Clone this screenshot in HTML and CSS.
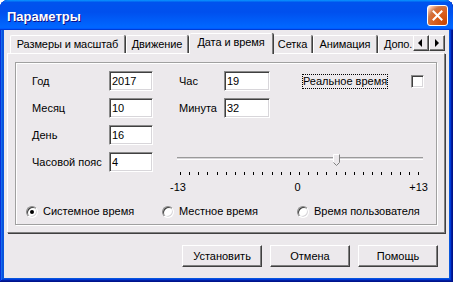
FILE: index.html
```html
<!DOCTYPE html>
<html lang="ru">
<head>
  <meta charset="UTF-8" />
  <title>Параметры</title>
  <link rel="stylesheet" href="styles.css">
</head>
<body>
<div class="window">
  <div class="titlebar">
    <span class="title">Параметры</span>
    <button class="close" aria-label="Закрыть">
      <svg width="11" height="11" viewBox="0 0 11 11"><path d="M1.5 1.5l8 8M9.5 1.5l-8 8" stroke="#fff" stroke-width="2" stroke-linecap="square"/></svg>
    </button>
  </div>

  <div class="client">
    <!-- Tab strip -->
    <div class="tabrow">
      <div class="tablist">
        <div class="tab t-size">Размеры и масштаб</div>
        <div class="tab t-move">Движение</div>
        <div class="tab t-date active">Дата и время</div>
        <div class="tab t-grid">Сетка</div>
        <div class="tab t-anim">Анимация</div>
        <div class="tab t-more">Допо.</div>
      </div>
      <div class="spin">
        <button class="spin-btn"><span class="arr left"></span></button>
        <button class="spin-btn"><span class="arr right"></span></button>
      </div>
    </div>

    <!-- Tab page -->
    <div class="panel">
      <div class="group">
        <div class="form">
          <span class="c1">Год</span>
          <input class="edit c2" value="2017">
          <span class="c4">Час</span>
          <input class="edit c5" value="19">
          <span class="c7"><span class="focus">Реальное время</span></span>
          <span class="check c9"></span>

          <span class="c1">Месяц</span>
          <input class="edit c2" value="10">
          <span class="c4">Минута</span>
          <input class="edit c5" value="32">

          <span class="c1">День</span>
          <input class="edit c2" value="16">

          <span class="c1">Часовой пояс</span>
          <input class="edit c2" value="4">
          <svg class="slider" width="246" height="24" viewBox="0 0 246 24">
            <rect x="0" y="5" width="246" height="1" fill="#9a9a9a"/>
            <rect x="0" y="6" width="246" height="1" fill="#d6d4d8"/>
            <rect x="0" y="7" width="246" height="1" fill="#ffffff"/>
            <path d="M3.5 20v3M12.5 20v3M21.5 20v3M30.5 20v3M40.5 20v3M49.5 20v3M58.5 20v3M67.5 20v3M76.5 20v3M85.5 20v3M95.5 20v3M104.5 20v3M113.5 20v3M122.5 20v3M131.5 20v3M140.5 20v3M149.5 20v3M159.5 20v3M168.5 20v3M177.5 20v3M186.5 20v3M195.5 20v3M204.5 20v3M214.5 20v3M223.5 20v3M232.5 20v3M241.5 20v3" stroke="#000" stroke-width="1"/>
            <polygon points="156.5,2.5 162.5,2.5 162.5,10.5 159.5,13.5 156.5,10.5" fill="#ece9ec"/>
            <polyline points="156.5,10.5 156.5,2.5 162.5,2.5" fill="none" stroke="#fff"/>
            <polyline points="162.5,2.5 162.5,10.5 159.5,13.5 156.5,10.5" fill="none" stroke="#808080"/>
          </svg>
        </div>

        <div class="scale">
          <span>-13</span><span>0</span><span>+13</span>
        </div>

        <div class="radios">
          <label class="radio"><span class="dot on"></span>Системное время</label>
          <label class="radio"><span class="dot"></span>Местное время</label>
          <label class="radio"><span class="dot"></span>Время пользователя</label>
        </div>
      </div>
    </div>

    <div class="buttons">
      <button class="btn">Установить</button>
      <button class="btn">Отмена</button>
      <button class="btn">Помощь</button>
    </div>
  </div>
</div>
</body>
</html>
```

FILE: styles.css
```css
*            {box-sizing:border-box;}
body         {margin:0; background:#fff; font-family:"Liberation Sans", Arial, sans-serif; font-size:11px; color:#000;}
button, input {font:inherit; color:inherit;}

/* window frame */
.window      {width:453px; height:282px; display:flex; flex-direction:column; padding:0 4px 4px; background:#0855dd; border-radius:8px 8px 0 0;
              box-shadow:inset -1px -1px #00138c, inset 1px 1px #0831d9, inset -2px -2px #001ea0, inset 2px 2px #166aee, inset -3px -3px #003bda, inset 3px 3px #0855dd;}
.titlebar    {height:30px; margin:0 -4px; padding:0 5px 0 7px; display:flex; align-items:center; border-radius:8px 8px 0 0;
              background:linear-gradient(180deg, #0997ff, #0053ee 8%, #0050ee 40%, #06f 88%, #06f 93%, #005bff 95%, #003dd7 96%, #003dd7);}
.title       {flex:1; padding-top:3px; color:#fff; font-size:13px; font-weight:bold; text-shadow:1px 1px #0f1089;}
.close       {width:21px; height:21px; padding:0; display:flex; align-items:center; justify-content:center; border:1px solid #fff; border-radius:3px;
              background:radial-gradient(circle at 90% 90%, #cc4600 0, #dc6527 55%, #cd7546 70%, #ffccb2 90%, #fff 100%);}
.client      {flex:1; display:flex; flex-direction:column; padding-top:3px; background:#ece9ec;}

/* tabs */
.tabrow      {display:flex; height:21px; padding-left:6px; position:relative; z-index:1;}
.tablist     {display:flex; width:403px; overflow:hidden;}
.tab         {flex:none; height:18px; margin-top:2px; padding:2px 0 0; line-height:13px; white-space:nowrap; text-align:center; letter-spacing:-0.1px;
              border:1px solid; border-bottom:0; border-color:#fff #808080 #fff #fff; border-radius:2px 2px 0 0; box-shadow:1px 0 #404040;}
.tab + .tab  {margin-left:1px;}
.tab.active  {height:21px; margin-top:0; margin-right:-1px; background:#ece9ec; position:relative; z-index:1;}
.t-size      {width:115px;}
.t-move      {width:62px;}
.t-date      {width:84px;}
.t-grid      {width:39px;}
.t-anim      {width:64px;}
.t-more      {width:60px; padding-left:5px; text-align:left;}
.spin        {display:flex; margin-top:2px;}
.spin-btn    {width:16px; height:16px; padding:0; display:flex; align-items:center; justify-content:center; background:#ece9ec;
              border:1px solid; border-color:#fff #404040 #404040 #fff; box-shadow:inset -1px -1px #808080;}
.arr         {width:0; height:0; border-top:4px solid transparent; border-bottom:4px solid transparent;}
.arr.left    {border-right:4px solid #000; margin-left:-2px;}
.arr.right   {border-left:4px solid #000;}

/* page */
.panel       {height:180px; margin:-1px 4px 0 3px; padding:8px 7px 7px; border:1px solid; border-color:#fff #808080 #808080 #fff; box-shadow:1px 1px #404040;}
.group       {height:163px; padding:8px 0 0; border:1px solid #a0a0a0; box-shadow:inset 1px 1px #fff, 1px 1px #fff;}
.form        {display:grid; margin-left:16px; grid-template-columns:77px 44px 26px 45px 46px 32px 87px 22px 13px; grid-auto-rows:20px; row-gap:7px; align-items:center;}
.c1          {grid-column:1;}
.c2          {grid-column:2;}
.c4          {grid-column:4;}
.c5          {grid-column:5;}
.c7          {grid-column:7;}
.c9          {grid-column:9;}
.edit        {width:100%; height:20px; padding:0 0 0 2px; background:#fff; border:1px solid; border-color:#8a8a8a #fff #fff #8a8a8a; box-shadow:inset 1px 1px #404040, inset -1px -1px #d8d6da; outline:none;}
.focus       {display:inline-block; padding:1px 1px; line-height:13px; outline:1px dotted #000; outline-offset:-1px;}
.check       {width:13px; height:13px; background:#fff; border:1px solid; border-color:#8a8a8a #fff #fff #8a8a8a; box-shadow:inset 1px 1px #404040, inset -1px -1px #d8d6da;}
.slider      {grid-column:4 / 10; align-self:start; margin-left:-2px; display:block;}
.scale       {display:flex; justify-content:space-between; width:258px; margin:9px 0 0 154px; line-height:13px;}
.radios      {display:grid; grid-template-columns:136px 135px auto; margin:11px 0 0 10px; line-height:13px;}
.radio       {display:flex; align-items:center; gap:5px; white-space:nowrap;}
.dot         {width:12px; height:12px; border-radius:50%; background:#fff; border:1px solid; border-color:#8a8a8a #fff #fff #8a8a8a;
              box-shadow:inset 1px 1px #404040, inset -1px -1px #d8d6da; display:flex; align-items:center; justify-content:center;}
.dot.on::after {content:""; width:4px; height:4px; border-radius:50%; background:#000;}

/* bottom buttons */
.buttons     {display:flex; justify-content:flex-end; gap:8px; margin:12px 11px 0 0;}
.btn         {width:80px; height:22px; padding:0; background:#ece9ec; border:1px solid; border-color:#fff #404040 #404040 #fff; box-shadow:inset -1px -1px #808080;}
```
